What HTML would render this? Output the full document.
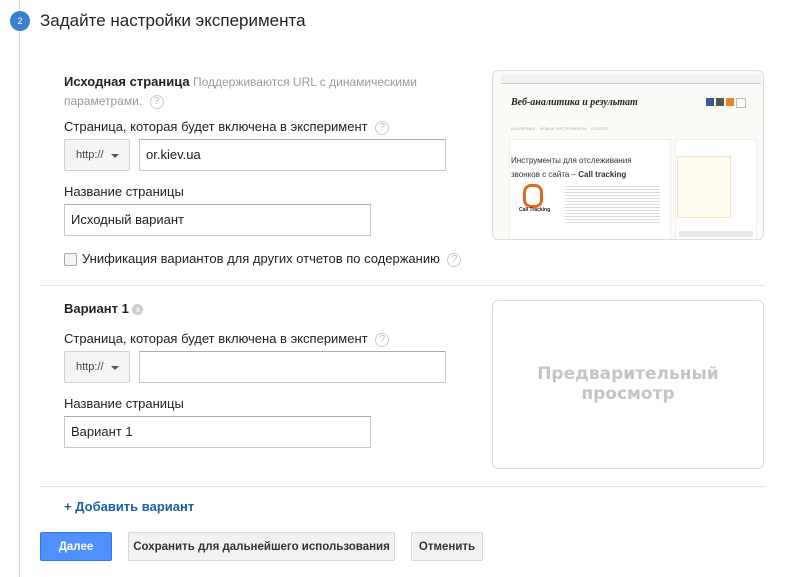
<!DOCTYPE html>
<html><head><meta charset="utf-8"><style>
body{margin:0;width:794px;height:577px;background:#fff;font-family:"Liberation Sans",Arial,sans-serif;position:relative;overflow:hidden;color:#222}
.a{position:absolute}
.lbl{font-size:13px;color:#222}
.q{display:inline-block;width:12px;height:12px;border:1px solid #ccc;border-radius:50%;font-size:10px;color:#bbb;text-align:center;line-height:12px;vertical-align:middle;margin-left:4px}
.inp{position:absolute;border:1px solid #c8c8c8;border-top-color:#aaa;background:#fff;font-size:13px;box-sizing:border-box;padding-left:6px}
.sel{position:absolute;border:1px solid #d0d0d0;border-radius:2px;background:#f5f5f5;font-size:11px;color:#444;box-sizing:border-box;padding-left:11px}
.sel:after{content:"";position:absolute;right:10px;top:14px;border:4px solid transparent;border-top:4px solid #555}
.btn{position:absolute;height:29px;box-sizing:border-box;border:1px solid #d8d8d8;border-radius:2px;background:#f2f2f2;font-size:11.5px;font-weight:bold;color:#333;text-align:center;line-height:28px}
.dot{position:absolute;left:40px;width:725px;border-top:1px dotted #ccc}
</style></head><body>
<div class="a" style="left:19px;top:0;width:1px;height:577px;background:#d6d6d6"></div>
<div class="a" style="left:10px;top:11px;width:20px;height:20px;border-radius:50%;background:#3a7fd0;color:#fff;font-size:9px;text-align:center;line-height:20px">2</div>
<div class="a" style="left:40px;top:11px;font-size:17px;color:#222">Задайте настройки эксперимента</div>

<div class="a" style="left:64px;top:72px;width:360px;font-size:12px;line-height:19px;color:#999"><b style="color:#222;font-size:13px">Исходная страница</b> Поддерживаются URL с динамическими параметрами. <span class="q">?</span></div>
<div class="a lbl" style="left:64px;top:119px">Страница, которая будет включена в эксперимент <span class="q">?</span></div>
<div class="sel" style="left:64px;top:139px;width:66px;height:32px;line-height:30px">http://</div>
<div class="inp" style="left:139px;top:139px;width:307px;height:32px;line-height:30px">or.kiev.ua</div>
<div class="a lbl" style="left:64px;top:184px">Название страницы</div>
<div class="inp" style="left:64px;top:204px;width:307px;height:32px;line-height:30px">Исходный вариант</div>
<div class="a" style="left:64px;top:253px;width:11px;height:11px;border:1px solid #aaa;border-radius:2px;background:#f4f4f4"></div>
<div class="a lbl" style="left:82px;top:251px">Унификация вариантов для других отчетов по содержанию <span class="q">?</span></div>

<div class="a" style="left:492px;top:70px;width:270px;height:168px;border:1px solid #ddd;border-radius:6px;background:#fafaf6;overflow:hidden">
 <div class="a" style="left:8px;top:4px;width:260px;height:8px;background:#eef0f3;border-bottom:1px solid #ccc"></div>
 <div class="a" style="left:18px;top:26px;font-family:'Liberation Serif',serif;font-style:italic;font-weight:bold;font-size:10px;color:#222">Веб-аналитика и результат</div>
 <div class="a" style="left:213px;top:27px;width:8px;height:8px;background:#3b5998"></div>
 <div class="a" style="left:223px;top:27px;width:8px;height:8px;background:#555"></div>
 <div class="a" style="left:233px;top:27px;width:8px;height:8px;background:#f08020"></div>
 <div class="a" style="left:243px;top:27px;width:8px;height:8px;border:1px solid #bbb"></div>
 <div class="a" style="left:18px;top:55px;font-size:4px;color:#aaa">АНАЛИТИКА &nbsp;&nbsp; НОВЫЕ ИНСТРУМЕНТЫ &nbsp;&nbsp; О БЛОГЕ</div>
 <div class="a" style="left:16px;top:68px;width:160px;height:100px;background:#fff;border:1px solid #eee"></div>
 <div class="a" style="left:18px;top:83px;font-size:8px;line-height:14px;color:#333">Инструменты для отслеживания<br>звонков с сайта – <b>Call tracking</b></div>
 <div class="a" style="left:30px;top:113px;width:14px;height:18px;border:3px solid #e06a20;border-radius:8px"></div>
 <div class="a" style="left:26px;top:136px;font-size:5px;font-weight:bold">Call Tracking</div>
 <div class="a" style="left:72px;top:113px;width:95px;height:40px;background:repeating-linear-gradient(#fff 0 2px,#ddd 2px 3px)"></div>
 <div class="a" style="left:182px;top:68px;width:80px;height:100px;background:#fff;border:1px solid #eee"></div>
 <div class="a" style="left:184px;top:85px;width:52px;height:60px;border:1px solid #f2e0c0;background:#fffcf0"></div>
 <div class="a" style="left:186px;top:160px;width:74px;height:6px;background:#e8e8e8"></div>
</div>

<div class="dot" style="top:285px"></div>

<div class="a" style="left:64px;top:301px;font-size:13px;font-weight:bold">Вариант 1 <span style="display:inline-block;width:11px;height:11px;border-radius:50%;background:#ccc;color:#fff;font-size:8px;line-height:11px;text-align:center;vertical-align:middle">x</span></div>
<div class="a lbl" style="left:64px;top:331px">Страница, которая будет включена в эксперимент <span class="q">?</span></div>
<div class="sel" style="left:64px;top:351px;width:66px;height:32px;line-height:30px">http://</div>
<div class="inp" style="left:139px;top:351px;width:307px;height:32px"></div>
<div class="a lbl" style="left:64px;top:396px">Название страницы</div>
<div class="inp" style="left:64px;top:416px;width:307px;height:32px;line-height:30px">Вариант 1</div>
<div class="a" style="left:492px;top:300px;width:272px;height:169px;border:1px solid #ddd;border-radius:6px;box-sizing:border-box"></div>
<div class="a" style="left:492px;top:364px;width:272px;text-align:center;font-family:'DejaVu Sans',sans-serif;font-weight:bold;font-size:17px;line-height:20px;color:#c4c4c4">Предварительный<br>просмотр</div>

<div class="dot" style="top:486px"></div>
<div class="a" style="left:64px;top:499px;font-size:13px;font-weight:bold;color:#1f5fa8">+ Добавить вариант</div>

<div class="btn" style="left:40px;top:532px;width:72px;background:#4d90fe;border-color:#3079ed;color:#fff">Далее</div>
<div class="btn" style="left:128px;top:532px;width:267px">Сохранить для дальнейшего использования</div>
<div class="btn" style="left:411px;top:532px;width:72px">Отменить</div>
</body></html>
